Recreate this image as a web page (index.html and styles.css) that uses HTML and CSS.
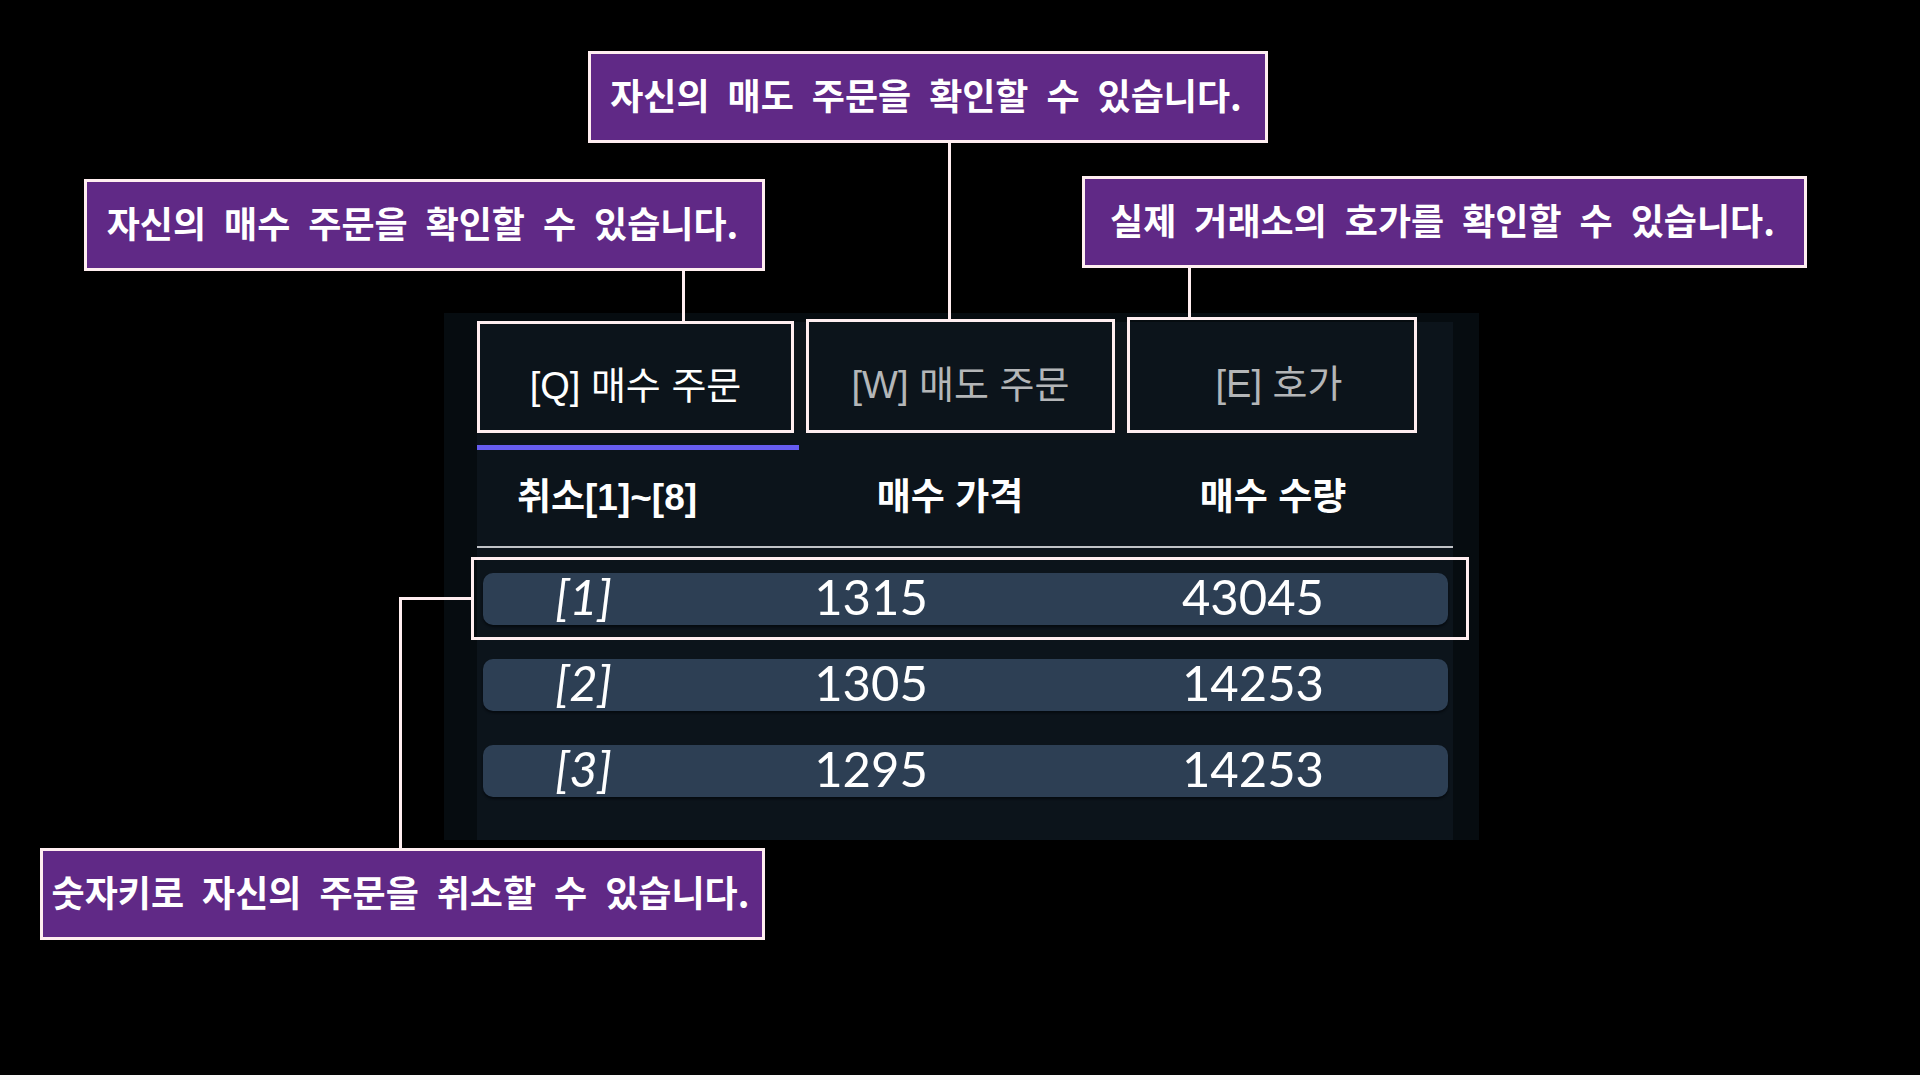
FILE: index.html
```html
<!DOCTYPE html>
<html lang="ko">
<head>
<meta charset="utf-8">
<meta name="viewport" content="width=device-width, initial-scale=1">
<title>주문 화면 안내</title>
<link rel="stylesheet" href="styles.css">
</head>
<body>
<main class="guide">
  <section class="panel">
    <div class="board">
      <div class="tabs" role="tablist">
        <button class="tab tab-buy" type="button" role="tab" aria-selected="true">[Q] 매수 주문</button>
        <button class="tab tab-sell" type="button" role="tab" aria-selected="false">[W] 매도 주문</button>
        <button class="tab tab-quote" type="button" role="tab" aria-selected="false">[E] 호가</button>
      </div>
      <div class="indicator"></div>
      <table class="orders">
        <thead>
          <tr class="head-row"><th scope="col">취소[1]~[8]</th><th scope="col">매수 가격</th><th scope="col">매수 수량</th></tr>
        </thead>
        <tbody>
          <tr class="order order-marked"><td class="key">[1]</td><td>1315</td><td>43045</td></tr>
          <tr class="order"><td class="key">[2]</td><td>1305</td><td>14253</td></tr>
          <tr class="order"><td class="key">[3]</td><td>1295</td><td>14253</td></tr>
        </tbody>
      </table>
    </div>

    <div class="line line-buy"></div>
    <div class="line line-sell"></div>
    <div class="line line-quote"></div>
    <div class="elbow"></div>

    <p class="callout callout-buy">자신의&ensp;매수&ensp;주문을&ensp;확인할&ensp;수&ensp;있습니다.</p>
    <p class="callout callout-sell">자신의&ensp;매도&ensp;주문을&ensp;확인할&ensp;수&ensp;있습니다.</p>
    <p class="callout callout-quote">실제&ensp;거래소의&ensp;호가를&ensp;확인할&ensp;수&ensp;있습니다.</p>
    <p class="callout callout-cancel">숫자키로&ensp;자신의&ensp;주문을&ensp;취소할&ensp;수&ensp;있습니다.</p>
  </section>
</main>
</body>
</html>
```
FILE: styles.css
```css
:root {
  --outline: #ffeef0;
  --purple: #602986;
}

* {
  box-sizing: border-box;
}

body {
  margin: 0;
  min-height: 100vh;
  background: #000;
  border-bottom: 5px solid #f8f8f8;
  color: #fff;
  font-family: "Noto Sans CJK KR", sans-serif;
}

.guide {
  display: grid;
  grid-template-columns: 444fr 1035fr 441fr;
  padding-top: 313px;
}

.panel {
  grid-column: 2;
  position: relative;
  padding: 4px 26px 0 33px;
  background: #060c10;
}

.board {
  background: linear-gradient(transparent 5px, #0c141b 5px);
}

/* Tabs */
.tabs {
  display: grid;
  grid-template-columns: 317fr 309fr 290fr;
  column-gap: 12px;
  align-items: end;
  padding-right: 36px;
}

.tab {
  height: 112px;
  padding: 18px 0 0;
  border: 3px solid var(--outline);
  background: transparent;
  color: #b4b6b8;
  font: 400 38px/52px "Liberation Sans", "Noto Sans CJK KR", sans-serif;
  white-space: nowrap;
}

.tab[aria-selected="true"] {
  color: #fff;
}

.tab-sell {
  height: 114px;
}

.tab-quote {
  height: 116px;
  padding-left: 14px;
}

.indicator {
  width: 33%;
  height: 5px;
  margin-top: 12px;
  background: #665cf0;
}

/* Orders */
.orders,
.orders thead,
.orders tbody {
  display: block;
}

.head-row {
  display: grid;
  grid-template-columns: 260fr 426fr 220fr;
  align-items: center;
  height: 98px;
  padding-right: 70px;
  border-bottom: 2px solid #c0c2c6;
}

.head-row th {
  padding: 0;
  font: 700 37px/50px "Liberation Sans", "Noto Sans CJK KR", sans-serif;
  white-space: nowrap;
}

.orders tbody {
  display: grid;
  row-gap: 34px;
  padding: 25px 5px 43px 6px;
}

.order {
  position: relative;
  display: grid;
  grid-template-columns: 201fr 374fr 390fr;
  height: 52px;
  border-radius: 10px;
  background: #2d3f54;
  box-shadow: 0 2px 2px #060b10;
}

.order td {
  padding: 0;
  font: 400 49px/46px Lato, sans-serif;
  text-align: center;
}

.order .key {
  font-style: italic;
}

.order-marked::after {
  content: "";
  position: absolute;
  inset: -16px -21px -15px -12px;
  border: 3px solid var(--outline);
}

/* Callouts */
.callout {
  position: absolute;
  margin: 0;
  padding: 0 4px 6px 0;
  border: 3px solid var(--outline);
  background: var(--purple);
  font-size: 36px;
  font-weight: 700;
  line-height: 80px;
  text-align: center;
  white-space: nowrap;
}

.callout-buy {
  left: -360px;
  top: -134px;
  width: 681px;
}

.callout-sell {
  left: 144px;
  top: -262px;
  width: 680px;
}

.callout-quote {
  left: 638px;
  top: -137px;
  width: 725px;
}

.callout-cancel {
  left: -404px;
  top: 535px;
  width: 725px;
}

.line {
  position: absolute;
  width: 3px;
  background: var(--outline);
}

.line-buy {
  left: 238px;
  top: -42px;
  height: 50px;
}

.line-sell {
  left: 504px;
  top: -170px;
  height: 176px;
}

.line-quote {
  left: 744px;
  top: -45px;
  height: 49px;
}

.elbow {
  position: absolute;
  left: -45px;
  top: 284px;
  width: 72px;
  height: 252px;
  border: solid var(--outline);
  border-width: 3px 0 0 3px;
}
```
